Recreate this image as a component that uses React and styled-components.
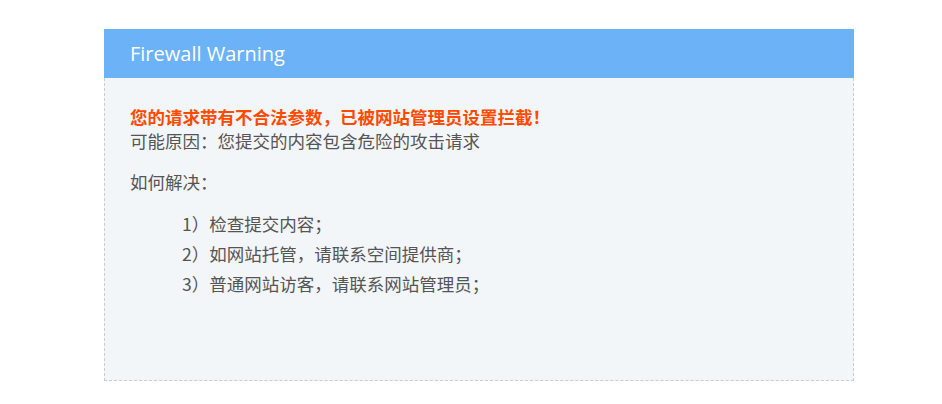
import React from "react";
import styled, { createGlobalStyle } from "styled-components";

const GlobalStyle = createGlobalStyle`
  html, body {
    margin: 0;
    padding: 0;
    background: #fff;
  }
  body {
    font-family: "Noto Sans CJK SC", "Noto Sans", sans-serif;
  }
`;

const Page = styled.div`
  padding: 29px 0 0 104px;
`;

const Panel = styled.div`
  width: 750px;
  box-sizing: border-box;
`;

const Header = styled.div`
  height: 49px;
  background: #6cb2f6;
  color: #fff;
  font-size: 20px;
  line-height: 50px;
  padding-left: 26px;
  font-family: "Open Sans", "Noto Sans", sans-serif;
`;

const Body = styled.div`
  height: 303px;
  box-sizing: border-box;
  background: #f3f6f9;
  border: 1px dashed #c9cdd2;
  border-top: none;
  padding: 27px 25px 0 25px;
  color: #555;
  font-size: 17.5px;
  line-height: 24px;
`;

const Alert = styled.p`
  margin: 0;
  color: #ff4a00;
  font-weight: bold;
`;

const Text = styled.p`
  margin: ${(props) => props.$top || 0}px 0 0;
`;

const List = styled.ul`
  list-style: none;
  margin: 15px 0 0;
  padding-left: 52px;
`;

const Item = styled.li`
  line-height: 30px;
`;

export default function App() {
  return (
    <>
      <GlobalStyle />
      <Page>
        <Panel>
          <Header>Firewall Warning</Header>
          <Body>
            <Alert>您的请求带有不合法参数，已被网站管理员设置拦截！</Alert>
            <Text>可能原因：您提交的内容包含危险的攻击请求</Text>
            <Text $top={17}>如何解决：</Text>
            <List>
              <Item>1）检查提交内容；</Item>
              <Item>2）如网站托管，请联系空间提供商；</Item>
              <Item>3）普通网站访客，请联系网站管理员；</Item>
            </List>
          </Body>
        </Panel>
      </Page>
    </>
  );
}
